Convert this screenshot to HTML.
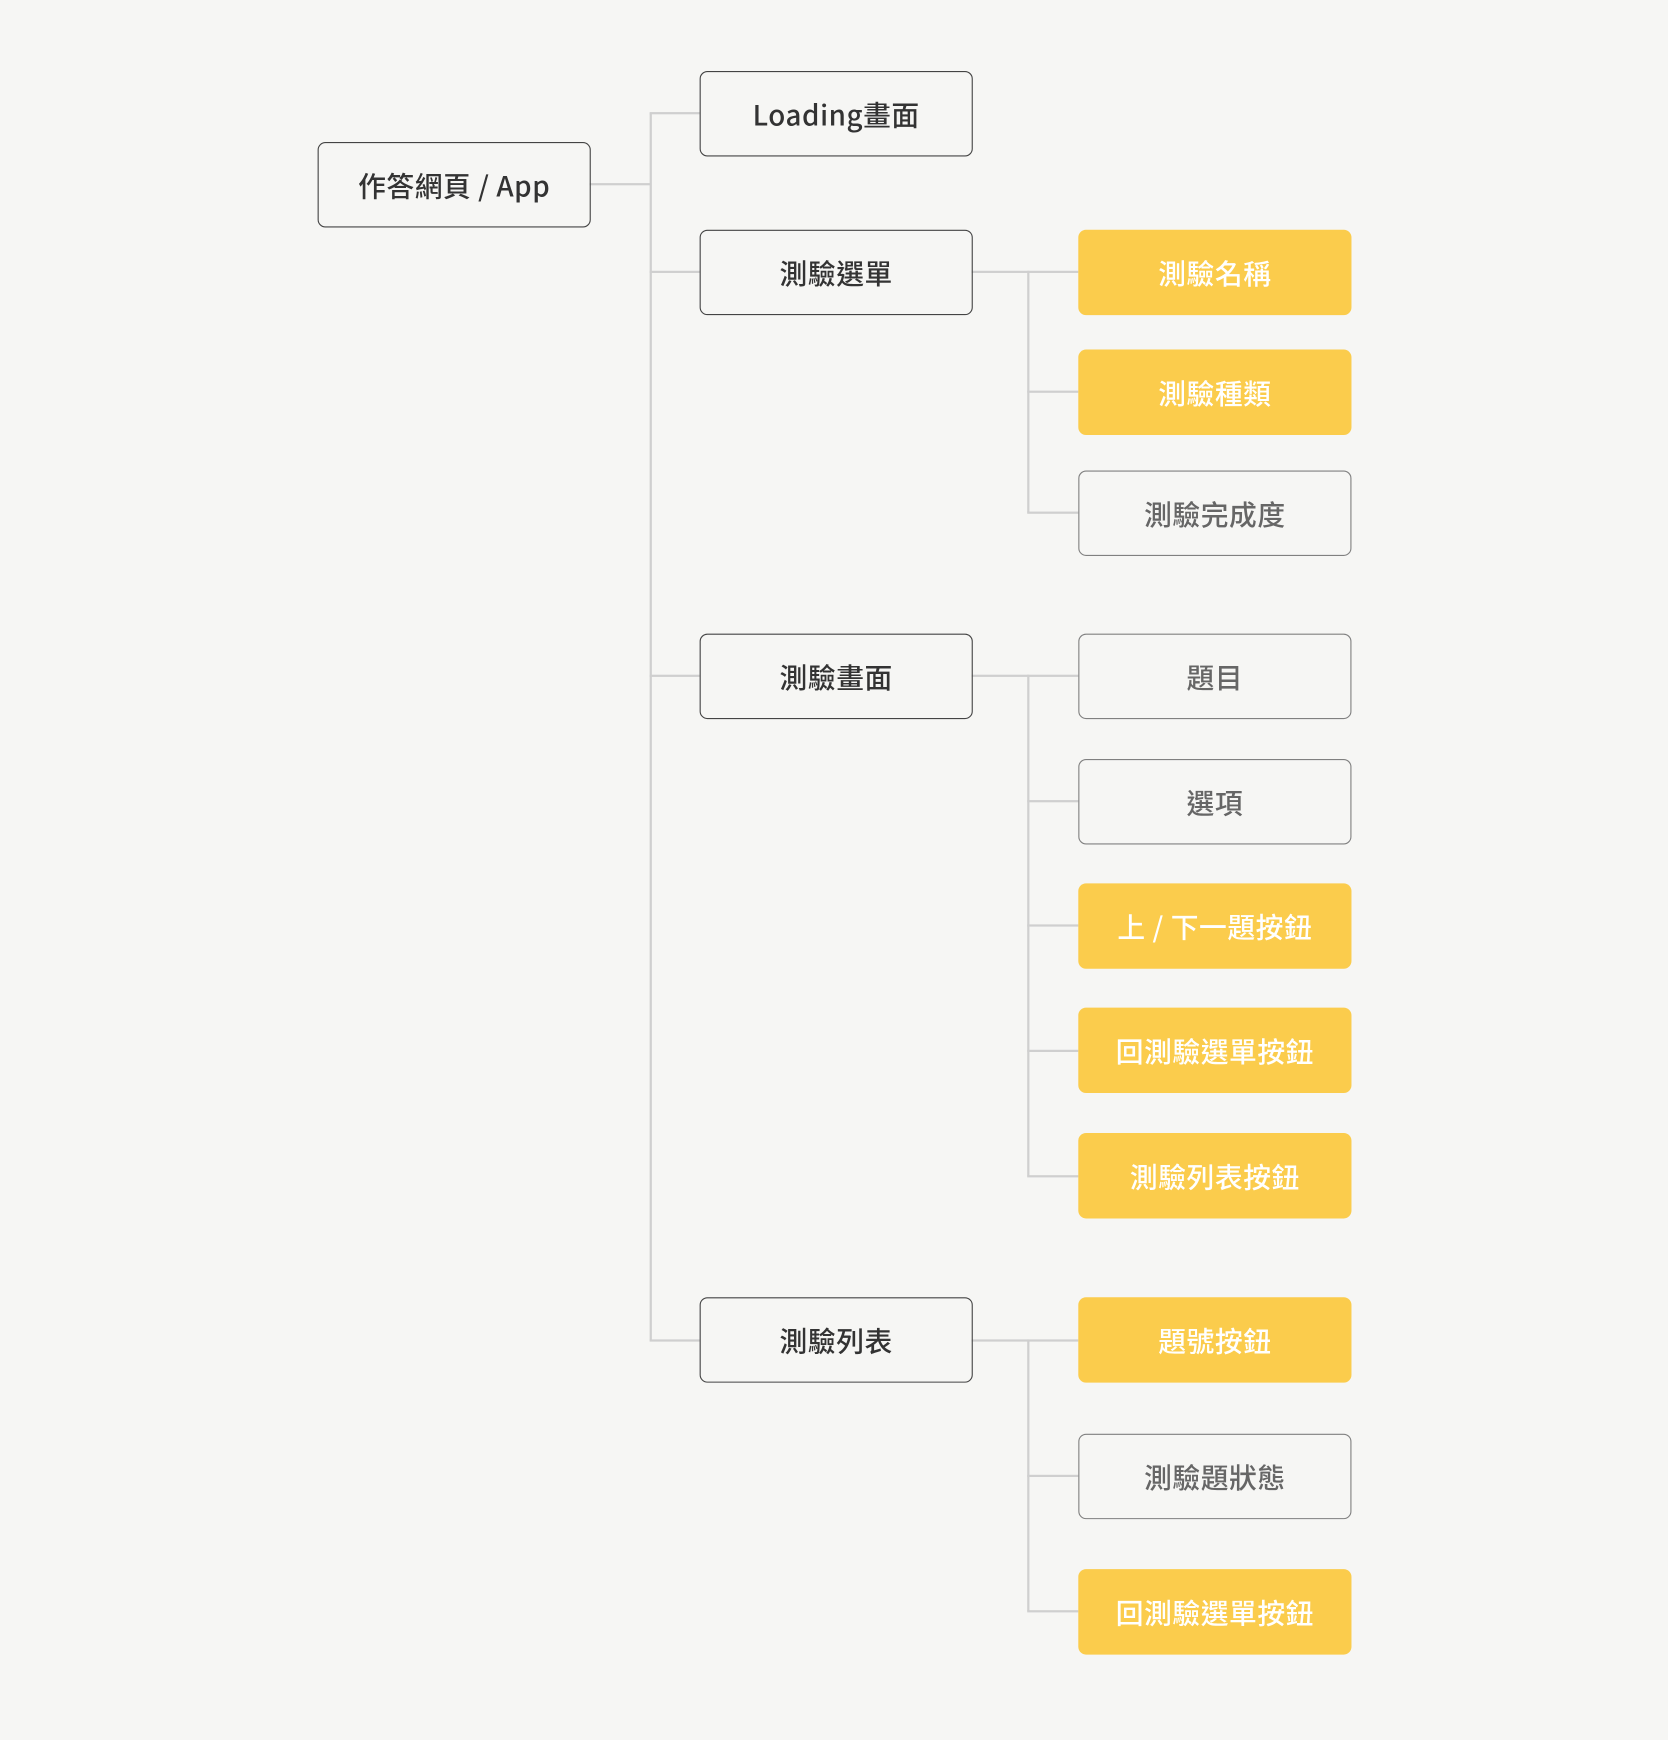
<!DOCTYPE html>
<html><head><meta charset="utf-8"><style>
html,body{margin:0;padding:0;background:#f6f6f4;}
body{width:1668px;height:1740px;overflow:hidden;position:relative;}
#w{position:absolute;left:0;top:0;width:1502px;height:1568px;transform:scale(1.1105,1.1097);transform-origin:0 0;}
.b{position:absolute;box-sizing:border-box;width:246px;height:77px;border-radius:7px;display:flex;align-items:center;justify-content:center;font-family:"Noto Sans CJK TC","Liberation Sans",sans-serif;font-weight:500;font-size:25px;letter-spacing:0.5px;}
.d{border:1.5px solid #444;color:#333;}
.g{border:1.5px solid #808080;color:#666;}
.y{background:#fbcc4c;color:#fff;}
.l{position:absolute;background:#cfcfcf;}
</style></head><body><div id="w">
<div class="l" style="left:531px;top:165px;width:55px;height:1.5px"></div>
<div class="l" style="left:585px;top:102px;width:1.5px;height:1106px"></div>
<div class="l" style="left:585px;top:101px;width:45px;height:1.5px"></div>
<div class="l" style="left:585px;top:244px;width:45px;height:1.5px"></div>
<div class="l" style="left:585px;top:608px;width:45px;height:1.5px"></div>
<div class="l" style="left:585px;top:1207px;width:45px;height:1.5px"></div>

<div class="l" style="left:875px;top:244px;width:96px;height:1.5px"></div>
<div class="l" style="left:925px;top:244px;width:1.5px;height:218px"></div>
<div class="l" style="left:925px;top:352px;width:46px;height:1.5px"></div>
<div class="l" style="left:925px;top:461px;width:46px;height:1.5px"></div>

<div class="l" style="left:875px;top:608px;width:96px;height:1.5px"></div>
<div class="l" style="left:925px;top:608px;width:1.5px;height:452px"></div>
<div class="l" style="left:925px;top:721px;width:46px;height:1.5px"></div>
<div class="l" style="left:925px;top:833px;width:46px;height:1.5px"></div>
<div class="l" style="left:925px;top:946px;width:46px;height:1.5px"></div>
<div class="l" style="left:925px;top:1059px;width:46px;height:1.5px"></div>

<div class="l" style="left:875px;top:1207px;width:96px;height:1.5px"></div>
<div class="l" style="left:925px;top:1207px;width:1.5px;height:245px"></div>
<div class="l" style="left:925px;top:1329px;width:46px;height:1.5px"></div>
<div class="l" style="left:925px;top:1451px;width:46px;height:1.5px"></div>

<div class="b d" style="left:286px;top:128px">作答網頁 / App</div>
<div class="b d" style="left:630px;top:64px">Loading畫面</div>
<div class="b d" style="left:630px;top:207px">測驗選單</div>
<div class="b d" style="left:630px;top:571px">測驗畫面</div>
<div class="b d" style="left:630px;top:1169px">測驗列表</div>

<div class="b y" style="left:971px;top:207px">測驗名稱</div>
<div class="b y" style="left:971px;top:315px">測驗種類</div>
<div class="b g" style="left:971px;top:424px">測驗完成度</div>
<div class="b g" style="left:971px;top:571px">題目</div>
<div class="b g" style="left:971px;top:684px">選項</div>
<div class="b y" style="left:971px;top:796px">上 / 下一題按鈕</div>
<div class="b y" style="left:971px;top:908px">回測驗選單按鈕</div>
<div class="b y" style="left:971px;top:1021px">測驗列表按鈕</div>
<div class="b y" style="left:971px;top:1169px">題號按鈕</div>
<div class="b g" style="left:971px;top:1292px">測驗題狀態</div>
<div class="b y" style="left:971px;top:1414px">回測驗選單按鈕</div>
</div></body></html>
